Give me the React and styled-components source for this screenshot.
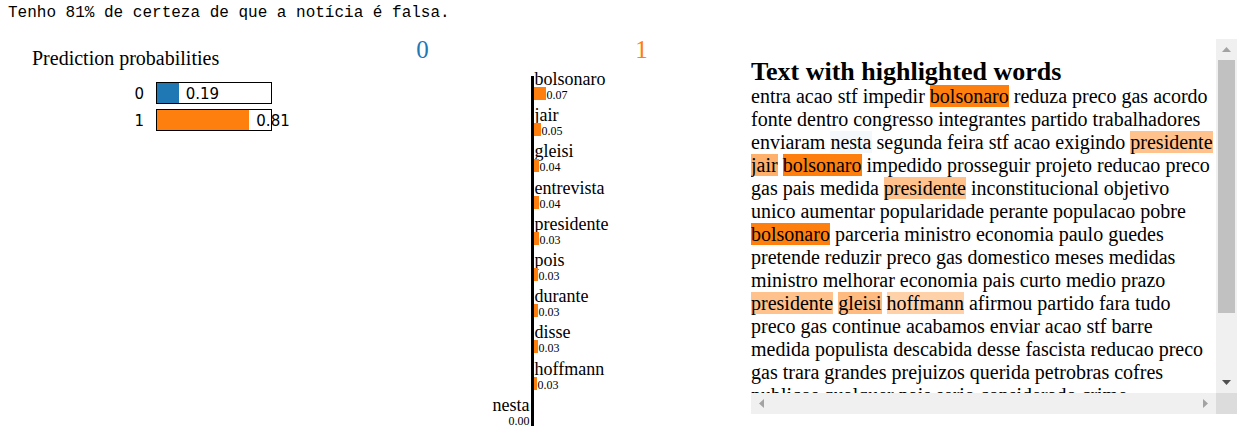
import React from "react";
import styled, { createGlobalStyle } from "styled-components";

const BLUE = "#1f77b4";
const ORANGE = "#ff7f0e";

const GlobalStyle = createGlobalStyle`
  * { box-sizing: border-box; }
  body {
    margin: 0;
    background: #fff;
    color: #000;
    font-family: "Liberation Serif", "Times New Roman", serif;
  }
`;

const Page = styled.main`
  padding: 0 9px 0 8px;
`;

const Output = styled.pre`
  margin: 0;
  padding-top: 3px;
  height: 39px;
  font: 16px/20px "Liberation Mono", monospace;
`;

const Explanation = styled.div`
  display: grid;
  grid-template-columns: 305fr 438fr 486fr;
  align-items: start;
`;

const Probabilities = styled.section`
  padding: 8px 0 0 24px;
`;

const ProbTitle = styled.h2`
  margin: 0 0 13px;
  font-size: 20px;
  font-weight: 400;
  line-height: 22px;
`;

const ProbRow = styled.div`
  display: flex;
  gap: 12px;
  margin-bottom: 5px;
  height: 22px;
  font: 15px/24px "DejaVu Sans", sans-serif;
`;

const ProbName = styled.span`
  width: 112px;
  text-align: right;
`;

const ProbBox = styled.div`
  display: flex;
  gap: 7px;
  width: 116px;
  border: 1px solid #000;
  line-height: 22px;
  white-space: nowrap;
`;

const ProbFill = styled.div`
  flex: none;
  background: ${(p) => p.$color};
`;

const ClassNames = styled.div`
  display: grid;
  grid-template-columns: 1fr 1fr;
  height: 30px;
  text-align: center;
  font-size: 25px;
  line-height: 22px;
`;

const ClassName = styled.span`
  color: ${(p) => p.$color};
`;

const Chart = styled.div`
  display: grid;
  grid-template-columns: 1fr 3px 1fr;
  height: 362px;
`;

const Axis = styled.div`
  margin: 7px 0 5px;
  background: #000;
`;

const Side = styled.div`
  display: flex;
  flex-direction: column;
  justify-content: ${(p) => (p.$left ? "flex-end" : "flex-start")};
  align-items: ${(p) => (p.$left ? "flex-end" : "flex-start")};
`;

const Feature = styled.div`
  flex: 0 0 10%;
  display: flex;
  flex-direction: column;
  align-items: ${(p) => (p.$left ? "flex-end" : "flex-start")};
`;

const FeatureName = styled.span`
  padding: 0 1px;
  height: 18px;
  font-size: 18px;
  line-height: 20px;
`;

const FeatureBar = styled.div`
  display: flex;
  flex-direction: ${(p) => (p.$left ? "row-reverse" : "row")};
  gap: 1px;
  height: 13px;
  font-size: 12px;
  line-height: 17px;
`;

const Bar = styled.i`
  background: ${(p) => p.$color};
`;

const TextPane = styled.section`
  display: grid;
  grid-template-columns: 1fr 21px;
  grid-template-rows: 354px 21px;
`;

const Document = styled.div`
  overflow: hidden;
  padding-top: 19px;
  font-size: 20px;
  line-height: 23px;
`;

const DocTitle = styled.h2`
  margin: 0;
  font-size: 26px;
  line-height: 27px;
`;

const DocText = styled.p`
  margin: 0;
`;

const Word = styled.mark`
  color: #000;
  background: rgba(${(p) => (p.$blue ? "31, 119, 180" : "255, 127, 14")}, ${(p) => p.$alpha});
`;

const Track = styled.div`
  display: flex;
  flex-direction: ${(p) => (p.$vertical ? "column" : "row")};
  justify-content: space-between;
  background: #f0f0f0;
`;

const Thumb = styled.div`
  flex: 0 0 253px;
  margin: 0 2px auto;
  background: #c1c1c1;
`;

const Arrow = styled.button`
  display: grid;
  place-items: center;
  flex: none;
  width: 21px;
  height: 21px;
  padding: 0;
  border: 0;
  background: none;
  color: ${(p) => (p.$active ? "#505050" : "#a3a3a3")};
`;

const Corner = styled.div`
  background: #dcdcdc;
`;

const probabilities = [
  { name: "0", value: 0.19, color: BLUE },
  { name: "1", value: 0.81, color: ORANGE },
];

const features = [
  { name: "bolsonaro", value: "0.07", size: 12 },
  { name: "jair", value: "0.05", size: 7 },
  { name: "gleisi", value: "0.04", size: 5 },
  { name: "entrevista", value: "0.04", size: 5 },
  { name: "presidente", value: "0.03", size: 5 },
  { name: "pois", value: "0.03", size: 4 },
  { name: "durante", value: "0.03", size: 4 },
  { name: "disse", value: "0.03", size: 4 },
  { name: "hoffmann", value: "0.03", size: 3 },
];

const highlights = {
  bolsonaro: { $alpha: 1 },
  jair: { $alpha: 0.62 },
  gleisi: { $alpha: 0.53 },
  presidente: { $alpha: 0.48 },
  hoffmann: { $alpha: 0.36 },
  nesta: { $alpha: 0.05, $blue: true },
};

const text =
  "entra acao stf impedir bolsonaro reduza preco gas acordo fonte dentro congresso integrantes partido trabalhadores enviaram nesta segunda feira stf acao exigindo presidente jair bolsonaro impedido prosseguir projeto reducao preco gas pais medida presidente inconstitucional objetivo unico aumentar popularidade perante populacao pobre bolsonaro parceria ministro economia paulo guedes pretende reduzir preco gas domestico meses medidas ministro melhorar economia pais curto medio prazo presidente gleisi hoffmann afirmou partido fara tudo preco gas continue acabamos enviar acao stf barre medida populista descabida desse fascista reducao preco gas trara grandes prejuizos querida petrobras cofres publicos qualquer pais serio considerado crime";

const arrows = {
  up: "M0 5 L4.5 0 L9 5Z",
  down: "M0 0 L9 0 L4.5 5Z",
  left: "M5 0 L0 4.5 L5 9Z",
  right: "M0 0 L5 4.5 L0 9Z",
};

function ScrollArrow({ direction, active }) {
  const upright = direction === "up" || direction === "down";
  return (
    <Arrow type="button" aria-label={`Scroll ${direction}`} $active={active}>
      <svg width={upright ? 9 : 5} height={upright ? 5 : 9} fill="currentColor">
        <path d={arrows[direction]} />
      </svg>
    </Arrow>
  );
}

function FeatureItem({ name, value, size, left }) {
  return (
    <Feature $left={left}>
      <FeatureName>{name}</FeatureName>
      <FeatureBar $left={left}>
        <Bar $color={left ? BLUE : ORANGE} style={{ width: size }} />
        {value}
      </FeatureBar>
    </Feature>
  );
}

export default function App() {
  return (
    <Page>
      <GlobalStyle />
      <Output>Tenho 81% de certeza de que a notícia é falsa.</Output>
      <Explanation>
        <Probabilities>
          <ProbTitle>Prediction probabilities</ProbTitle>
          {probabilities.map((p) => (
            <ProbRow key={p.name}>
              <ProbName>{p.name}</ProbName>
              <ProbBox>
                <ProbFill $color={p.color} style={{ width: `${p.value * 100}%` }} />
                {p.value}
              </ProbBox>
            </ProbRow>
          ))}
        </Probabilities>

        <section>
          <ClassNames>
            <ClassName $color={BLUE}>0</ClassName>
            <ClassName $color={ORANGE}>1</ClassName>
          </ClassNames>
          <Chart>
            <Side $left>
              <FeatureItem name="nesta" value="0.00" size={0} left />
            </Side>
            <Axis />
            <Side>
              {features.map((f) => (
                <FeatureItem key={f.name} {...f} />
              ))}
            </Side>
          </Chart>
        </section>

        <TextPane>
          <Document>
            <DocTitle>Text with highlighted words</DocTitle>
            <DocText>
              {text.split(" ").map((word, i) => (
                <React.Fragment key={i}>
                  {highlights[word] ? <Word {...highlights[word]}>{word}</Word> : word}{" "}
                </React.Fragment>
              ))}
            </DocText>
          </Document>
          <Track $vertical>
            <ScrollArrow direction="up" />
            <Thumb />
            <ScrollArrow direction="down" active />
          </Track>
          <Track>
            <ScrollArrow direction="left" />
            <ScrollArrow direction="right" />
          </Track>
          <Corner />
        </TextPane>
      </Explanation>
    </Page>
  );
}
